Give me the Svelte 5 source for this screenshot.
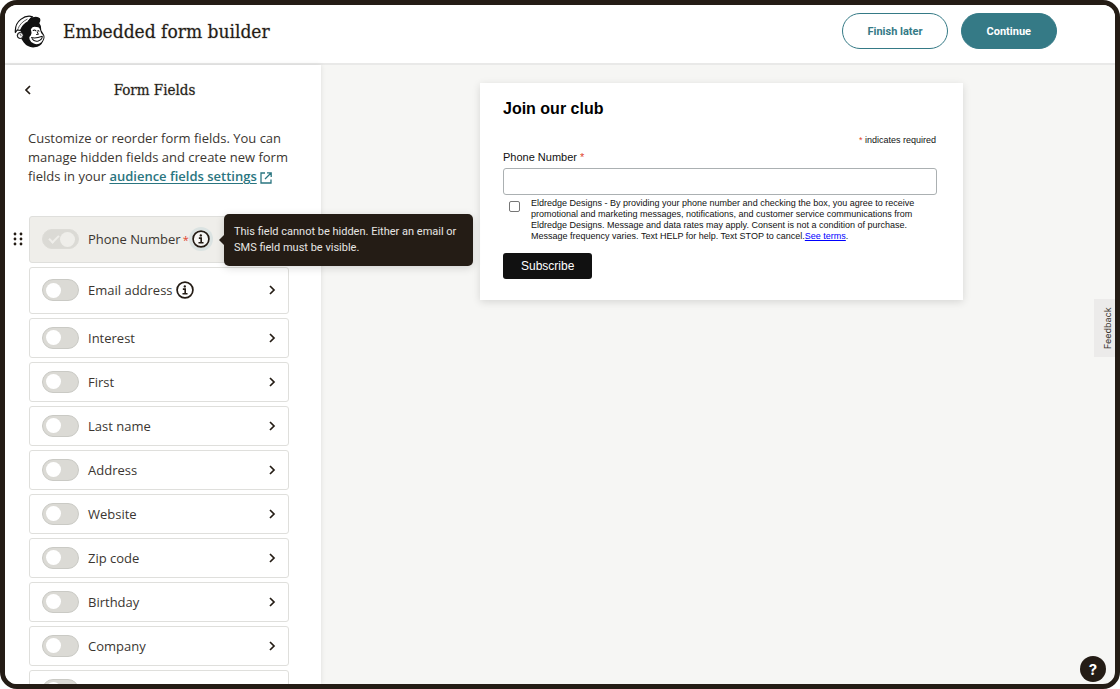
<script>
  let fields = $state([
    { name: 'Phone Number', on: true, locked: true, info: true },
    { name: 'Email address', on: false, info: true },
    { name: 'Interest', on: false },
    { name: 'First', on: false },
    { name: 'Last name', on: false },
    { name: 'Address', on: false },
    { name: 'Website', on: false },
    { name: 'Zip code', on: false },
    { name: 'Birthday', on: false },
    { name: 'Company', on: false },
    { name: '', on: false }
  ]);
</script>

{#snippet infoIcon()}
  <svg viewBox="0 0 20 20" width="18" height="18" fill="none" stroke="currentColor" aria-hidden="true">
    <circle cx="10" cy="10" r="8.8" stroke-width="1.9" />
    <circle cx="9.8" cy="6" r="1.3" fill="currentColor" stroke="none" />
    <path d="M7.6 9h2.6v5M7.2 14.1h5.6" stroke-width="1.8" />
  </svg>
{/snippet}

<div class="frame">
  <header>
    <svg class="logo" viewBox="40 42 92 98" aria-hidden="true">
      <path d="M60 82L78 62L113 62Q121 72 121 87L129 101Q133 109 127 119Q120 136 101 138Q81 140 69 124L62 113Q49 114 48 102Q50 93 61 91Z" fill="#111" />
      <path d="M90 84Q96 75 106 78Q116 77 118 88Q119 97 127 103Q130 113 121 123Q111 132 99 127Q89 123 86 114Q83 107 90 102Q94 96 90 84Z" fill="#fff" />
      <path d="M44 94Q42 69 60 55Q78 41 95 47Q87 52 82 62Q67 69 59 88L50 86Z" fill="#fff" stroke="#111" stroke-width="3.5" stroke-linejoin="round" />
      <path d="M52 83Q58 65 80 54" fill="none" stroke="#111" stroke-width="2" />
      <path d="M79 67Q83 53 95 49Q110 45 117 52Q121 61 113 68Q98 63 79 67Z" fill="#111" />
      <path d="M51 100Q57 91 65 96Q70 102 64 110Q58 114 53 109Q49 105 51 100Z" fill="#fff" stroke="#111" stroke-width="2.5" />
      <path d="M57 100Q62 99 61 105" fill="none" stroke="#111" stroke-width="2" />
      <path d="M97 88Q101 85 105 89M111 88L114 90M109 92L112 99L107 100" fill="none" stroke="#111" stroke-width="3" stroke-linecap="round" />
      <path d="M91 109Q104 113 124 105Q124 115 112 119Q99 122 93 112" fill="#fff" stroke="#111" stroke-width="3" stroke-linejoin="round" />
    </svg>
    <h1>Embedded form builder</h1>
    <div class="actions">
      <button type="button" class="pill outline">Finish later</button>
      <button type="button" class="pill solid">Continue</button>
    </div>
  </header>

  <div class="body">
    <aside>
      <div class="side-head">
        <button type="button" class="bare" aria-label="Back">
          <svg viewBox="0 0 8 10" width="8" height="10" fill="none" stroke="currentColor" stroke-width="1.7"><path d="M6 1L2 5l4 4" /></svg>
        </button>
        <h2>Form Fields</h2>
      </div>
      <p class="intro">
        Customize or reorder form fields. You can manage hidden fields and create new form fields in your
        <a href="#settings">audience fields settings</a>
        <svg class="ext" viewBox="0 0 12 12" width="12" height="12" fill="none" stroke="currentColor" stroke-width="1.3" aria-hidden="true"><path d="M5 1H1v10h10V7.4M7 .9h4.2V5M11 1L5 7" /></svg>
      </p>

      <ul>
        {#each fields as field, i}
          <li class:tall={field.info} class:locked={field.locked}>
            {#if field.locked}
              <svg class="grip" viewBox="0 0 10 14" width="10" height="14" fill="currentColor" aria-hidden="true">
                {#each [2, 7, 12] as y}
                  <circle cx="2" cy={y} r="1.4" /><circle cx="8" cy={y} r="1.4" />
                {/each}
              </svg>
            {/if}
            <input type="checkbox" id="field-{i}" aria-label={field.name ? undefined : 'Field'} bind:checked={field.on} disabled={field.locked} />
            <label for="field-{i}">{field.name}{#if field.locked}<span class="star">*</span>{/if}</label>
            {#if field.info}
              <button type="button" class="bare info" class:focus={field.locked} aria-label="About this field">{@render infoIcon()}</button>
            {/if}
            {#if field.locked}
              <div class="tip" role="tooltip">This field cannot be hidden. Either an email or SMS field must be visible.</div>
            {:else}
              <button type="button" class="bare open" aria-label="Edit field">
                <svg viewBox="0 0 8 10" width="8" height="10" fill="none" stroke="currentColor" stroke-width="1.7"><path d="M2 1l4 4-4 4" /></svg>
              </button>
            {/if}
          </li>
        {/each}
      </ul>
    </aside>

    <main>
      <form class="card" onsubmit={(e) => e.preventDefault()}>
        <h3>Join our club</h3>
        <p class="required"><span>*</span> indicates required</p>
        <label class="phone-label" for="phone">Phone Number <span>*</span></label>
        <input class="phone" id="phone" type="tel" />
        <div class="consent">
          <input type="checkbox" id="consent" />
          <label for="consent">Eldredge Designs - By providing your phone number and checking the box, you agree to receive promotional and marketing messages, notifications, and customer service communications from Eldredge Designs. Message and data rates may apply. Consent is not a condition of purchase. Message frequency varies. Text HELP for help. Text STOP to cancel.<a href="#terms">See terms</a>.</label>
        </div>
        <button class="subscribe">Subscribe</button>
      </form>
    </main>
  </div>

  <button type="button" class="feedback">Feedback</button>
  <button type="button" class="help" aria-label="Help">?</button>
</div>

<style>
  :global(body) { margin: 0; background: #fff; }
  * { box-sizing: border-box; }
  h1, h2, h3, p, ul { margin: 0; padding: 0; }
  button { font-family: inherit; cursor: pointer; }
  .frame {
    position: relative;
    display: flex;
    flex-direction: column;
    height: 100vh;
    border: 5px solid #241c15;
    border-radius: 17px;
    overflow: hidden;
    background: #f6f6f4;
    color: #3b3631;
    font-family: "Open Sans", sans-serif;
    font-size: 13px;
  }
  header {
    flex: none;
    display: flex;
    align-items: center;
    height: 60px;
    padding: 0 58px 6px 9px;
    border-bottom: 2px solid #e9e9e8;
    background: #fff;
  }
  .logo { width: 31px; height: 33px; }
  h1, h2 {
    font-family: "DejaVu Serif Condensed", "DejaVu Serif", serif;
    font-weight: 400;
    color: #241c15;
    -webkit-text-stroke: 1px #241c1540;
  }
  h1 { margin-left: 18px; font-size: 19px; }
  .actions { display: flex; gap: 13px; margin-left: auto; }
  .pill {
    height: 36px;
    padding: 0 25px;
    border: 1px solid #357a86;
    border-radius: 18px;
    font: 700 11px Roboto, sans-serif;
  }
  .outline { padding: 0 24px; background: #fff; color: #357a86; }
  .solid { background: #357a86; color: #fff; }
  .body { flex: 1; display: flex; min-height: 0; }
  aside {
    flex: none;
    width: 316px;
    padding: 0 32px 0 24px;
    background: #fff;
    box-shadow: 0 0 5px #0000001a;
    z-index: 1;
  }
  .bare { display: flex; padding: 0; border: 0; background: none; color: #241c15; }
  .side-head { display: grid; grid-template-columns: 8px 1fr 8px; align-items: center; height: 50px; margin: 0 4px 0 -5px; }
  h2 { font-size: 15px; text-align: center; }
  .intro { margin: 0 -4px 0 -1px; padding-top: 14px; line-height: 19px; }
  .intro a { color: #2a7580; font-weight: 600; text-underline-offset: 2px; }
  .ext { color: #2a7580; vertical-align: -3px; }
  ul { display: flex; flex-direction: column; gap: 4px; margin-top: 30px; list-style: none; }
  li {
    position: relative;
    flex: none;
    display: flex;
    align-items: center;
    height: 40px;
    padding: 0 12px 1px;
    border: 1px solid #dfdfdc;
    border-radius: 3px;
    background: #fff;
  }
  .tall { height: 47px; }
  .locked { background: #efeeea; z-index: 2; }
  li input {
    appearance: none;
    display: flex;
    align-items: center;
    width: 37px;
    height: 22px;
    margin: 0 9px 0 0;
    padding: 0 3px;
    border: 1px solid #cacac5;
    border-radius: 11px;
    background: #dbdad5;
  }
  li input::before { content: ""; width: 15px; height: 15px; border-radius: 50%; background: #fff; }
  li input:checked::before { margin-left: auto; }
  li input:disabled { height: 20px; border-color: #dddcd7; }
  li input:disabled::before { background: #efeeea; }
  li input:disabled::after {
    content: "";
    order: -1;
    width: 8px;
    height: 4px;
    margin: 0 0 3px 3px;
    border: solid #efeeea;
    border-width: 0 0 2px 2px;
    transform: rotate(-45deg);
  }
  .star { margin-left: 2px; color: #e0442e; font-size: 11px; }
  .info { margin-left: 3px; border-radius: 50%; }
  .focus { background: #f6f6f4; box-shadow: 0 0 0 3px #dbe3e2; }
  .open { margin-left: auto; }
  .grip { position: absolute; left: -17px; color: #241c15; }
  .tip {
    position: absolute;
    left: 194px;
    top: -3px;
    width: 249px;
    padding: 10px;
    border-radius: 5px;
    background: #241c15;
    color: #e7e6e4;
    font: 11px/16px Roboto, sans-serif;
    box-shadow: 0 2px 8px #00000026;
  }
  .tip::before {
    content: "";
    position: absolute;
    left: -5px;
    top: 20px;
    border: solid transparent;
    border-width: 6px 6px 6px 0;
    border-right-color: #241c15;
  }
  main { flex: 1; min-width: 0; padding: 18px 152px 0 159px; }
  .card {
    padding: 17px 26px 21px 23px;
    background: #fff;
    color: #111;
    font-family: "Liberation Sans", Arial, sans-serif;
    box-shadow: 0 2px 8px #00000021;
  }
  h3 { font-size: 16px; line-height: 18px; color: #000; }
  .required { margin: 16px 1px 0 0; font-size: 9px; line-height: 12px; text-align: right; }
  .required span, .phone-label span { color: #e0442e; }
  .phone-label { display: block; margin-top: 4px; font-size: 11px; line-height: 14px; }
  .phone { display: block; width: 100%; height: 27px; margin-top: 4px; padding: 0 6px; border: 1px solid #abb0b2; border-radius: 3px; background: #fff; }
  .consent { display: flex; gap: 11px; margin: 3px 16px 0 5px; font-size: 9px; line-height: 11px; }
  .consent input { flex: none; appearance: none; width: 11px; height: 11px; margin: 3px 0 0 1px; border: 1px solid #767676; border-radius: 2px; background: #fff; }
  .consent a { color: #00f; }
  .subscribe { margin-top: 11px; height: 26px; padding: 0 18px; border: 0; border-radius: 3px; background: #111; color: #fff; font-size: 12px; }
  .feedback {
    position: absolute;
    right: 0;
    top: 294px;
    width: 21px;
    height: 58px;
    padding: 0 5px 0 0;
    border: 0;
    background: #ecebea;
    color: #3b3631;
    font: 9px Inter, sans-serif;
    writing-mode: vertical-rl;
    transform: rotate(180deg);
  }
  .help {
    position: absolute;
    right: 9px;
    bottom: 2px;
    width: 26px;
    height: 26px;
    padding: 0;
    border: 0;
    border-radius: 50%;
    background: #241c15;
    color: #fff;
    font: 700 15px Inter, sans-serif;
  }
</style>
